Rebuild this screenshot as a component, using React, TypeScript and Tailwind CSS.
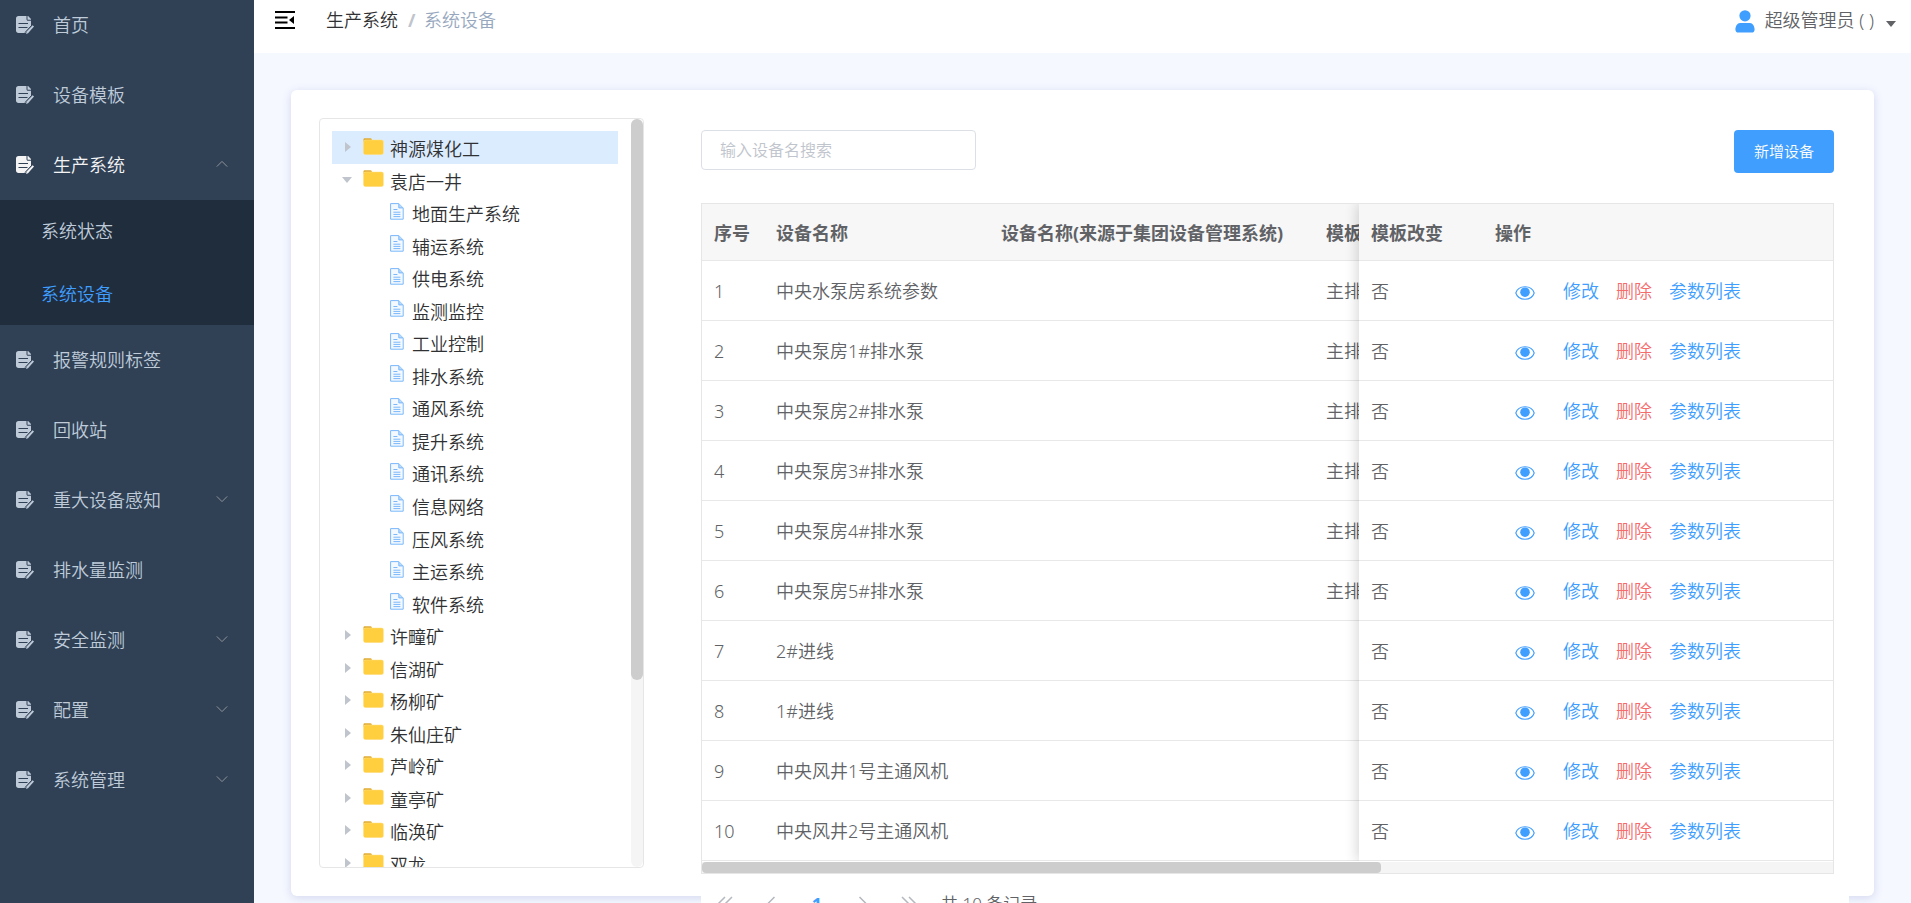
import React from "react";

type MenuItem = { label: string; open?: boolean; expandable?: boolean; children?: string[] };

const menu: MenuItem[] = [
  { label: "首页" },
  { label: "设备模板" },
  { label: "生产系统", expandable: true, open: true, children: ["系统状态", "系统设备"] },
  { label: "报警规则标签" },
  { label: "回收站" },
  { label: "重大设备感知", expandable: true },
  { label: "排水量监测" },
  { label: "安全监测", expandable: true },
  { label: "配置", expandable: true },
  { label: "系统管理", expandable: true },
];

type TreeNode = { label: string; leaf?: boolean; open?: boolean; selected?: boolean };

const leaves = [
  "地面生产系统", "辅运系统", "供电系统", "监测监控", "工业控制", "排水系统", "通风系统",
  "提升系统", "通讯系统", "信息网络", "压风系统", "主运系统", "软件系统",
];

const tree: TreeNode[] = [
  { label: "神源煤化工", selected: true },
  { label: "袁店一井", open: true },
  ...leaves.map((label) => ({ label, leaf: true })),
  ...["许疃矿", "信湖矿", "杨柳矿", "朱仙庄矿", "芦岭矿", "童亭矿", "临涣矿", "双龙"].map((label) => ({ label })),
];

const rows = [
  { name: "中央水泵房系统参数", template: "主排" },
  { name: "中央泵房1#排水泵", template: "主排" },
  { name: "中央泵房2#排水泵", template: "主排" },
  { name: "中央泵房3#排水泵", template: "主排" },
  { name: "中央泵房4#排水泵", template: "主排" },
  { name: "中央泵房5#排水泵", template: "主排" },
  { name: "2#进线", template: "" },
  { name: "1#进线", template: "" },
  { name: "中央风井1号主通风机", template: "" },
  { name: "中央风井2号主通风机", template: "" },
];

function DocEditIcon() {
  return (
    <svg viewBox="0 0 18 18" className="size-[18px] shrink-0" aria-hidden="true">
      <path fill="currentColor" d="M2.500 0H10.500v3c0 1.200.6 1.800 1.600 1.800H15v5.700L9.200 17H2.500C1 17 0 16 0 14.500v-12C0 1 1 0 2.500 0Z" />
      <path fill="currentColor" d="M11.500 0h.6L15 3v.8h-3.500z" />
      <path stroke="#304156" strokeWidth="1.2" d="M2.500 7.500h9.500M2.500 11.500h9" />
      <path stroke="#304156" strokeWidth="1" d="M15.500 9.500 9 16.500" />
      <path fill="currentColor" d="M16.600 9.200 18 10.600 12 17.200l-1.900.8.5-2.200z" />
    </svg>
  );
}

function Chevron({ up }: { up?: boolean }) {
  return (
    <svg viewBox="0 0 12 12" className="size-3 shrink-0 text-[#909399]" fill="none" stroke="currentColor" aria-hidden="true">
      <path d={up ? "M.8 7.600 6 2.400l5.200 5.200" : "M.8 2.400 6 7.600l5.200-5.200"} />
    </svg>
  );
}

function Caret({ open }: { open?: boolean }) {
  return (
    <svg viewBox="0 0 16 16" className="size-4 shrink-0 text-[#c0c4cc]" fill="currentColor" aria-hidden="true">
      <path d={open ? "M3 5h10l-5 6z" : "M6 3v10l6-5z"} />
    </svg>
  );
}

function FolderIcon() {
  return (
    <svg viewBox="0 0 21 17" className="h-[17px] w-[21px] shrink-0" aria-hidden="true">
      <path fill="#e0ad35" d="M.5 4V1.4C.5.6 1 .2 1.7.2h5.8c.7 0 1.1.4 1.2 1V4z" />
      <rect x=".3" y="1.8" width="20.4" height="15" rx="2" fill="#ffdd7d" />
      <rect x=".8" y="2.3" width="19.2" height="14" rx="1.6" fill="#ffcf40" />
    </svg>
  );
}

function FileIcon() {
  return (
    <svg viewBox="0 0 14 17" className="h-[17px] w-[14px] shrink-0" fill="none" stroke="#7ab8fb" aria-hidden="true">
      <path fill="#f4f9ff" d="M.6.6h8.2l4.4 4.4v11.2H.6z" />
      <path fill="#b9dafd" d="M8.8.8v4.1h4.1" />
      <path d="M3.4 6.5h4M3.4 9.2h7M3.4 11.4h7M3.4 13.6h7" />
    </svg>
  );
}

function EyeIcon() {
  return (
    <svg viewBox="0 0 20 14" className="h-[14px] w-5 shrink-0" aria-hidden="true">
      <path fill="none" stroke="currentColor" strokeWidth="1.1" d="M.8 7C2 3.200 5.600.8 10 .8S18 3.200 19.200 7C18 10.800 14.400 13.200 10 13.200S2 10.800.8 7Z" />
      <circle cx="10" cy="6.200" r="4.800" fill="currentColor" />
    </svg>
  );
}

function Sidebar() {
  return (
    <aside className="w-[254px] shrink-0 bg-[#304156] text-[#bfcbd9]">
      <nav className="-mt-2.5">
        <ul>
          {menu.map((item) => (
            <li key={item.label}>
              <a
                href="#"
                className={`flex h-[70px] items-center gap-[19px] pr-[26px] pl-4 ${item.open ? "text-[#f4f4f5]" : ""}`}
              >
                <DocEditIcon />
                <span className="flex-1">{item.label}</span>
                {item.expandable && <Chevron up={item.open} />}
              </a>
              {item.children && (
                <ul className="grid h-[125px] auto-rows-fr bg-[#1f2d3d]">
                  {item.children.map((child) => (
                    <li key={child}>
                      <a
                        href="#"
                        className={`flex h-full items-center pl-[41px] ${child === "系统设备" ? "text-[#409eff]" : ""}`}
                      >
                        {child}
                      </a>
                    </li>
                  ))}
                </ul>
              )}
            </li>
          ))}
        </ul>
      </nav>
    </aside>
  );
}

function Header() {
  return (
    <header className="flex h-[53px] shrink-0 items-center justify-between bg-white pr-[15px] pb-[14px] pl-5">
      <div className="flex items-center">
        <button type="button" aria-label="折叠菜单" className="mr-[31px] text-black">
          <svg viewBox="0 0 21 18" className="h-[18px] w-[21px]" aria-hidden="true">
            <path stroke="currentColor" strokeWidth="2" d="M1 1h20M1 6.500h12.500M1 11.500h12.500M1 17h20" />
            <path fill="currentColor" d="M20 5v8l-5-4z" />
          </svg>
        </button>
        <nav className="flex items-center gap-2.5">
          <a href="#" className="text-[#303133]">生产系统</a>
          <span className="w-1.5 text-center font-bold text-[#c0c4cc]">/</span>
          <span className="text-[#97a8be]">系统设备</span>
        </nav>
      </div>
      <button type="button" className="flex items-center text-[#606266]">
        <svg viewBox="0 0 20 23" className="mt-1 mr-2.5 h-[23px] w-5 text-[#409eff]" fill="currentColor" aria-hidden="true">
          <circle cx="10" cy="5.800" r="5.600" />
          <path d="M5 13h10c2.600 0 4.600 3.400 4.600 6.400 0 2-1 3.200-3 3.200H3.400c-2 0-3-1.200-3-3.200C.4 16.400 2.400 13 5 13Z" />
        </svg>
        <span>超级管理员 ( )</span>
        <svg viewBox="0 0 10 6" className="mt-2 ml-3 h-1.5 w-2.5" fill="currentColor" aria-hidden="true">
          <path d="M0 0h10L5 6z" />
        </svg>
      </button>
    </header>
  );
}

function DeviceTree() {
  return (
    <section className="relative h-full w-[325px] shrink-0 overflow-hidden rounded border border-[#e6e6e6] bg-white">
      <ul className="mt-3 mr-[25px] ml-3 grid h-[748px] auto-rows-fr text-[#303133]">
        {tree.map((node) => (
          <li
            key={node.label}
            className={`flex items-center ${node.leaf ? "gap-2 pl-[58px]" : "pl-[7px]"} ${node.selected ? "bg-[#dbecff]" : ""}`}
          >
            {node.leaf ? (
              <span className="pb-0.5"><FileIcon /></span>
            ) : (
              <>
                <Caret open={node.open} />
                <span className="mr-1.5 ml-2 pb-0.5"><FolderIcon /></span>
              </>
            )}
            <span className="pt-1">{node.label}</span>
          </li>
        ))}
      </ul>
      <div className="absolute inset-y-0 right-0 w-3 rounded-md bg-[#f5f5f5]">
        <div className="h-3/4 rounded-md bg-[#cdcdcd]" />
      </div>
    </section>
  );
}

const headCell = "h-[57px] overflow-hidden border-b border-[#e8e8e8] bg-[#f7f7f7] pt-0.5 pl-3 text-left font-bold whitespace-nowrap";
const cell = "h-[60px] overflow-hidden border-b border-[#e8e8e8] pl-3 whitespace-nowrap";

function DeviceTable() {
  return (
    <div className="border border-[#e6e6e6]">
      <div className="relative">
        <table className="w-full table-fixed border-separate border-spacing-0 text-[#606266]">
          <colgroup>
            <col className="w-[62px]" />
            <col className="w-[225px]" />
            <col />
            <col className="w-[45px]" />
            <col className="w-[124px]" />
            <col className="w-[350px]" />
          </colgroup>
          <thead>
            <tr>
              <th className={headCell}>序号</th>
              <th className={headCell}>设备名称</th>
              <th className={headCell}>设备名称(来源于集团设备管理系统)</th>
              <th className={headCell}>模板</th>
              <th className={headCell}>模板改变</th>
              <th className={headCell}>操作</th>
            </tr>
          </thead>
          <tbody>
            {rows.map((row, i) => (
              <tr key={row.name}>
                <td className={cell}>{i + 1}</td>
                <td className={cell}>{row.name}</td>
                <td className={cell} />
                <td className={cell}>{row.template}</td>
                <td className={cell}>否</td>
                <td className={cell}>
                  <div className="flex items-center pl-5 text-[#409eff]">
                    <button type="button" aria-label="查看" className="mt-1 mr-7"><EyeIcon /></button>
                    <a href="#" className="mr-[17px]">修改</a>
                    <a href="#" className="mr-[17px] text-[#f56c6c]">删除</a>
                    <a href="#">参数列表</a>
                  </div>
                </td>
              </tr>
            ))}
          </tbody>
        </table>
        <div className="pointer-events-none absolute inset-y-0 right-0 w-[474px] shadow-[-2px_0_12px_rgba(0,0,0,0.16)] [clip-path:inset(0_0_0_-16px)]" />
      </div>
      <div className="mt-px h-[11px] bg-[#f5f5f5]">
        <div className="h-full w-3/5 rounded bg-[#cdcdcd]" />
      </div>
    </div>
  );
}

function Arrow({ double, right }: { double?: boolean; right?: boolean }) {
  return (
    <svg
      viewBox="0 0 16 16"
      className={`size-4 ${right ? "-scale-x-100" : ""}`}
      fill="none"
      stroke="currentColor"
      strokeWidth="1.5"
      aria-hidden="true"
    >
      <path d={double ? "M8 1 1 8l7 7M15 1 8 8l7 7" : "M11.500 1l-7 7 7 7"} />
    </svg>
  );
}

function Pagination() {
  return (
    <nav className="-mr-[15px] flex h-[60px] items-center bg-white pl-4 text-[17px] text-[#606266]">
      <div className="flex items-center gap-[30px] text-[#b4b8bf]">
        <button type="button" aria-label="第一页"><Arrow double /></button>
        <button type="button" aria-label="上一页"><Arrow /></button>
        <button type="button" aria-current="page" className="w-4 text-center text-[18px] font-bold text-[#409eff]">1</button>
        <button type="button" aria-label="下一页"><Arrow right /></button>
        <button type="button" aria-label="最后一页"><Arrow double right /></button>
      </div>
      <span className="ml-6">共 10 条记录</span>
    </nav>
  );
}

export default function App() {
  return (
    <div className="flex h-screen overflow-hidden bg-[#f5f8ff] font-['Noto_Sans','Noto_Sans_CJK_SC',sans-serif] text-[18px] leading-6 font-[350]">
      <Sidebar />
      <div className="flex min-w-0 flex-1 flex-col">
        <Header />
        <main className="px-[37px] pt-[37px]">
          <div className="flex h-[calc(100vh-97px)] gap-[57px] rounded-md bg-white py-7 pr-10 pl-7 shadow-[0_2px_10px_rgba(80,90,170,0.2)]">
            <DeviceTree />
            <div className="min-w-0 flex-1 pt-3">
              <div className="mb-[30px] flex items-start justify-between">
                <input
                  type="text"
                  aria-label="输入设备名搜索"
                  placeholder="输入设备名搜索"
                  className="h-10 w-[275px] rounded border border-[#dcdfe6] px-[18px] text-[16px] placeholder:text-[#c0c4cc]"
                />
                <button type="button" className="h-[43px] w-[100px] rounded bg-[#409eff] pb-0.5 text-[15px] text-white">
                  新增设备
                </button>
              </div>
              <DeviceTable />
              <Pagination />
            </div>
          </div>
        </main>
      </div>
    </div>
  );
}
